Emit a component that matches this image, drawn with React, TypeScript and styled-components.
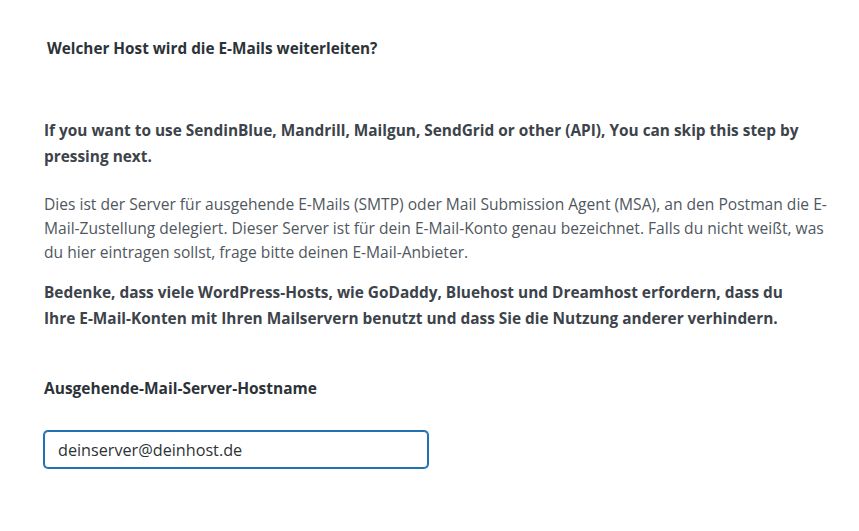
import React from 'react'
import styled, { createGlobalStyle } from 'styled-components'

const GlobalStyle = createGlobalStyle`
    html, body {
        margin: 0;
        padding: 0;
        background: #ffffff;
    }
    body {
        font-family: "Open Sans", "Noto Sans", sans-serif;
        color: #50575e;
    }
`

const Page = styled.div`
    box-sizing: border-box;
    width: 859px;
    min-height: 531px;
    padding: 38px 25px 40px 44px;
    background: #ffffff;
`

const StepTitle = styled.h2`
    margin: 0 0 60px 3px;
    font-size: 15.3px;
    font-weight: 700;
    line-height: 20px;
    color: #2c3338;
`

const Paragraph = styled.p<{ $bold?: boolean; $gap?: number }>`
    margin: 0 0 ${(p) => p.$gap ?? 12}px 0;
    font-size: ${(p) => (p.$bold ? 15.4 : 15.6)}px;
    line-height: ${(p) => (p.$bold ? 26 : 24)}px;
    font-weight: ${(p) => (p.$bold ? 700 : 400)};
    color: ${(p) => (p.$bold ? '#3c434a' : '#50575e')};
`

const FieldLabel = styled.label`
    display: block;
    margin: 0 0 33px 0;
    font-size: 15.5px;
    font-weight: 700;
    line-height: 20px;
    color: #2c3338;
`

const HostInput = styled.input`
    box-sizing: border-box;
    display: block;
    width: 384px;
    height: 37px;
    padding: 0 13px;
    border: 1px solid #2271b1;
    border-radius: 4px;
    box-shadow: 0 0 0 1px #2271b1;
    font-family: "Open Sans", "Noto Sans", sans-serif;
    font-size: 16.2px;
    color: #2c3338;
    outline: none;
`

const App: React.FC = () => {
    return (
        <Page>
            <GlobalStyle />
            <StepTitle>Welcher Host wird die E-Mails weiterleiten?</StepTitle>
            <Paragraph $bold $gap={22}>
                If you want to use SendinBlue, Mandrill, Mailgun, SendGrid or other (API), You can skip this step by
                pressing next.
            </Paragraph>
            <Paragraph $gap={16}>
                Dies ist der Server für ausgehende E-Mails (SMTP) oder Mail Submission Agent (MSA), an den Postman die
                E-Mail-Zustellung delegiert. Dieser Server ist für dein E-Mail-Konto genau bezeichnet. Falls du nicht
                weißt, was du hier eintragen sollst, frage bitte deinen E-Mail-Anbieter.
            </Paragraph>
            <Paragraph $bold $gap={46}>
                Bedenke, dass viele WordPress-Hosts, wie GoDaddy, Bluehost und Dreamhost erfordern, dass du
                <br />
                Ihre E-Mail-Konten mit Ihren Mailservern benutzt und dass Sie die Nutzung anderer verhindern.
            </Paragraph>
            <FieldLabel htmlFor="smtp-host">Ausgehende-Mail-Server-Hostname</FieldLabel>
            <HostInput id="smtp-host" type="text" defaultValue="deinserver@deinhost.de" />
        </Page>
    )
}

export default App
